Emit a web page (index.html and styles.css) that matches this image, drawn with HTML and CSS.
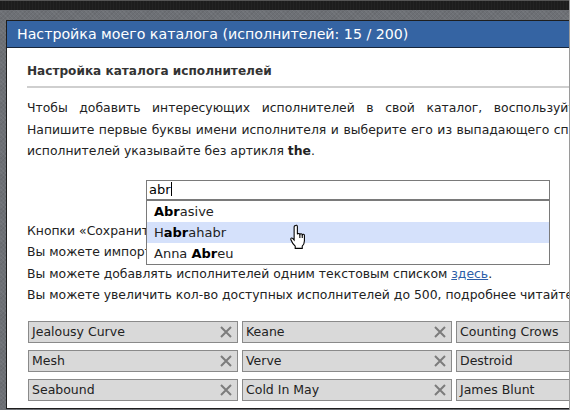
FILE: index.html
```html
<!DOCTYPE html>
<html>
<head>
<meta charset="utf-8">
<link rel="stylesheet" href="styles.css">
</head>
<body>
<div class="frame">
  <div class="topbar"></div>
  <div class="backdrop">
    <div class="dialog">
      <div class="dlg-head">Настройка моего каталога (исполнителей: 15 / 200)</div>
      <div class="dlg-body">
        <h2 class="section-title">Настройка каталога исполнителей</h2>
        <div class="intro">
          <div class="line spread">Чтобы добавить интересующих исполнителей в свой каталог, воспользуйтесь поиском.</div>
          <div class="line spread2">Напишите первые буквы имени исполнителя и выберите его из выпадающего списка. Названия</div>
          <div class="line">исполнителей указывайте без артикля <b>the</b>.</div>
        </div>
        <div class="search">
          <div class="search-input">abr<span class="caret"></span></div>
          <ul class="suggest">
            <li><b>Abr</b>asive</li>
            <li class="active">H<b>abr</b>ahabr</li>
            <li>Anna <b>Abr</b>eu</li>
          </ul>
          <svg class="cursor" width="20" height="26" viewBox="0 0 18 24">
            <path d="M5.5 1.5 C6.5 0.8 7.5 1.2 7.5 2.5 V9.5 C7.8 8.6 9.5 8.6 9.8 9.6 C10.2 8.8 11.8 8.9 12 9.9 C12.4 9.2 14 9.4 14 10.6 V15.5 C14 18 13 19.5 12 20.5 V22.5 H5.5 V20.5 C4 19 2.5 17 1.5 14.5 C1 13.2 2.2 12.4 3.2 13.3 L4.5 14.8 V2.5 C4.5 2 5 1.7 5.5 1.5 Z" fill="#fff" stroke="#000" stroke-width="1"/>
            <path d="M9.8 9.8 V13 M12 10 V13" stroke="#000" stroke-width="1" fill="none"/>
          </svg>
        </div>
        <div class="notes">
          <div class="line">Кнопки «Сохранить» и «Отменить» находятся внизу страницы.</div>
          <div class="line">Вы можете импортировать исполнителей из Last.fm.</div>
          <div class="line">Вы можете добавлять исполнителей одним текстовым списком <a href="#">здесь</a>.</div>
          <div class="line">Вы можете увеличить кол-во доступных исполнителей до 500, подробнее читайте здесь.</div>
        </div>
        <div class="tags">
          <div class="tag"><span>Jealousy Curve</span><svg class="x" viewBox="0 0 12 12"><path d="M1 1 L11 11 M11 1 L1 11"/></svg></div>
          <div class="tag"><span>Keane</span><svg class="x" viewBox="0 0 12 12"><path d="M1 1 L11 11 M11 1 L1 11"/></svg></div>
          <div class="tag"><span>Counting Crows</span><svg class="x" viewBox="0 0 12 12"><path d="M1 1 L11 11 M11 1 L1 11"/></svg></div>
          <div class="tag"><span>Mesh</span><svg class="x" viewBox="0 0 12 12"><path d="M1 1 L11 11 M11 1 L1 11"/></svg></div>
          <div class="tag"><span>Verve</span><svg class="x" viewBox="0 0 12 12"><path d="M1 1 L11 11 M11 1 L1 11"/></svg></div>
          <div class="tag"><span>Destroid</span><svg class="x" viewBox="0 0 12 12"><path d="M1 1 L11 11 M11 1 L1 11"/></svg></div>
          <div class="tag"><span>Seabound</span><svg class="x" viewBox="0 0 12 12"><path d="M1 1 L11 11 M11 1 L1 11"/></svg></div>
          <div class="tag"><span>Cold In May</span><svg class="x" viewBox="0 0 12 12"><path d="M1 1 L11 11 M11 1 L1 11"/></svg></div>
          <div class="tag"><span>James Blunt</span><svg class="x" viewBox="0 0 12 12"><path d="M1 1 L11 11 M11 1 L1 11"/></svg></div>
        </div>
      </div>
    </div>
  </div>
</div>
</body>
</html>
```
FILE: styles.css
```css
html, body {
  margin: 0;
  padding: 0;
  background: #ffffff;
}
body {
  font-family: "DejaVu Sans", Verdana, sans-serif;
  font-size: 12.4px;
  color: #222;
}
.frame {
  width: 569px;
  height: 410px;
  overflow: hidden;
  border-right: 1px solid #9a9a9a;
  box-sizing: content-box;
}
.topbar {
  height: 9px;
  border-top: 1px solid #555;
  background: repeating-linear-gradient(90deg, #1d1d1d 0 2px, #232323 2px 3px);
}
.backdrop {
  padding: 10px 0 0 6px;
  height: 400px;
  box-sizing: border-box;
  background:
    repeating-linear-gradient(45deg, rgba(255,255,255,0.05) 0 1px, rgba(0,0,0,0) 1px 3px),
    repeating-linear-gradient(-45deg, rgba(0,0,0,0.06) 0 1px, rgba(0,0,0,0) 1px 3px),
    #6d7075;
}
.dialog {
  width: 760px;
  height: 389px;
  border: 1px solid #1e1e1e;
  background: #fff;
  box-sizing: border-box;
}
.dlg-head {
  height: 26px;
  background: #3564a3;
  border-bottom: 1px solid #17253a;
  color: #fff;
  font-size: 14.2px;
  line-height: 26px;
  padding-left: 10px;
  white-space: nowrap;
}
.dlg-body {
  padding: 0 20px;
}
.section-title {
  margin: 0;
  padding: 15px 0 7px;
  font-size: 12.1px;
  font-weight: bold;
  color: #333;
  border-bottom: 2px solid #cfcfcf;
  line-height: 16px;
  white-space: nowrap;
}
.intro {
  margin-top: 9px;
}
.line {
  line-height: 21.5px;
  white-space: nowrap;
}
.spread {
  word-spacing: 7.6px;
}
.spread2 {
  word-spacing: 0.6px;
}
.search {
  position: relative;
  margin: 18px 0 0 119px;
  width: 404px;
}
.search-input {
  height: 20px;
  border: 1px solid #7a7a7a;
  box-sizing: border-box;
  font-size: 13px;
  line-height: 18px;
  padding-left: 2px;
  color: #000;
}
.caret {
  display: inline-block;
  width: 1px;
  height: 14px;
  background: #000;
  vertical-align: -2px;
}
.suggest {
  position: absolute;
  left: 0;
  top: 20px;
  width: 404px;
  margin: 0;
  padding: 0;
  list-style: none;
  background: #fff;
  border: 1px solid #7a7a7a;
  box-sizing: border-box;
  z-index: 2;
}
.suggest li {
  height: 21px;
  line-height: 21px;
  padding-left: 7px;
  font-size: 13px;
  color: #222;
}
.suggest li b {
  color: #000;
}
.suggest li.active {
  background: #d5e1fb;
}
.cursor {
  position: absolute;
  left: 143px;
  top: 44px;
  z-index: 3;
}
.notes {
  margin-top: 20px;
}
.notes a {
  color: #2d5ea8;
  text-decoration: underline;
}
.tags {
  display: grid;
  grid-template-columns: repeat(3, 210px);
  column-gap: 4px;
  row-gap: 7px;
  margin-top: 15px;
  margin-left: 1px;
}
.tag {
  height: 22px;
  box-sizing: border-box;
  border: 1px solid #8a8a8a;
  background: #d9d9d9;
  display: flex;
  align-items: center;
  justify-content: space-between;
  padding: 0 5px 0 3px;
  font-size: 12.5px;
  color: #222;
}
.x {
  width: 12px;
  height: 12px;
  stroke: #7c7c7c;
  stroke-width: 2;
  fill: none;
}
```
